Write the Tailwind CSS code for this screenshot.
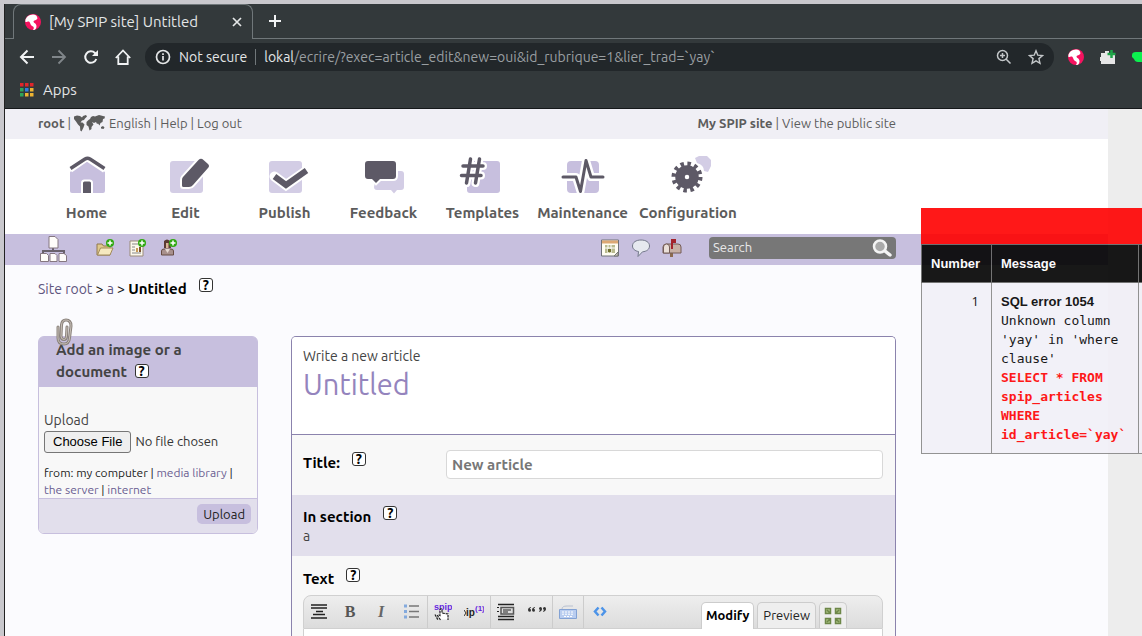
<!DOCTYPE html>
<html lang="en">
<head>
<meta charset="utf-8">
<title>[My SPIP site] Untitled</title>
<script src="https://cdn.jsdelivr.net/npm/@tailwindcss/browser@4"></script>
</head>
<body class="h-screen overflow-hidden bg-[#c9c8cd] pt-1 pl-1 font-['Ubuntu','Open_Sans',sans-serif] text-[13px] text-[#444]">
<svg class="hidden">
  <symbol id="spip" viewBox="0 0 16 16"><circle cx="8" cy="8" r="8" fill="#f5125f"/><path d="M.5 8C-.5 4 4 .5 8 .5c3 0 4.800 2.200 4.300 4.200C11.800 6.200 8.500 6 8.500 7.600c0 1.400 3 2 3 4.600 0 2-1 3.300-2.300 3.800H8c1-1.500 1.300-3-.5-3.800C5 11 5.500 8.500 4 7.500 3 7 1.500 8.500.5 8Z" fill="#fff"/></symbol>
  <symbol id="plus" viewBox="0 0 8 8"><circle cx="4" cy="4" r="4" fill="#2fa810"/><path d="M4 1.500v5M1.500 4h5" stroke="#fff" stroke-width="1.500"/></symbol>
</svg>
<div class="flex h-full flex-col overflow-hidden border-l border-[#222]">
  <!-- Browser chrome -->
  <header class="h-[105px] shrink-0 border-b border-[#15181a] bg-[#33393b] text-[15px] text-[#e4e6e7]">
    <div class="flex h-[35px] items-stretch">
      <div class="w-2 border-b border-[#70777a]"></div>
      <div class="flex w-60 items-center rounded-t-lg border border-b-0 border-[#70777a] pl-[11px] pr-[7px]">
        <svg class="size-4 shrink-0"><use href="#spip"/></svg>
        <span class="ml-2 grow whitespace-nowrap">[My SPIP site] Untitled</span>
        <button aria-label="Close tab"><svg class="size-4" viewBox="0 0 16 16" stroke="#e4e6e7" stroke-width="1.700"><path d="m4 4 8 8m0-8-8 8"/></svg></button>
      </div>
      <div class="flex grow items-center border-b border-[#70777a] pl-[14px]">
        <button aria-label="New tab"><svg class="size-4" viewBox="0 0 16 16" stroke="#f1f3f4" stroke-width="2"><path d="M8 2v12M2 8h12"/></svg></button>
      </div>
    </div>
    <div class="flex h-9 items-center pl-[14px] text-sm">
      <div class="flex gap-4">
        <button aria-label="Back"><svg class="size-4" viewBox="0 0 16 16" fill="none" stroke="#f1f3f4" stroke-width="2"><path d="M15 8H2m6.500-6.500L2 8l6.500 6.500"/></svg></button>
        <button aria-label="Forward"><svg class="size-4" viewBox="0 0 16 16" fill="none" stroke="#80868a" stroke-width="1.800"><path d="M1 8h13M7.500 1.500 14 8l-6.500 6.500"/></svg></button>
        <button aria-label="Reload"><svg class="size-4" viewBox="0 0 16 16" fill="none" stroke="#f1f3f4" stroke-width="2"><path d="M13.300 10A5.700 5.700 0 1 1 12 4l1.500 1.500"/><path d="M15 1v6H9Z" fill="#f1f3f4" stroke="none"/></svg></button>
        <button aria-label="Home page"><svg class="size-4" viewBox="0 0 16 16" fill="none" stroke="#f1f3f4" stroke-width="1.800"><path d="M.8 9 8 1.500 15.200 9M3.300 7.500V15h9.400V7.500"/></svg></button>
      </div>
      <div class="ml-[14px] flex h-7 min-w-0 grow items-center rounded-full bg-[#22272a] pr-[10px] pl-[10px]">
        <svg class="size-4" viewBox="0 0 16 16" fill="none" stroke="#e4e6e7" stroke-width="1.700"><circle cx="8" cy="8" r="6.500"/><path d="M8 7v4.500M8 4.300V6"/></svg>
        <span class="ml-2 whitespace-nowrap">Not secure</span>
        <span class="mx-2 h-4 w-px bg-[#70777a]"></span>
        <span class="grow whitespace-nowrap text-[#9a9fa2]"><span class="text-[#e4e6e7]">lokal</span>/ecrire/?exec=article_edit&amp;new=oui&amp;id_rubrique=1&amp;lier_trad=`yay`</span>
        <button aria-label="Zoom"><svg class="size-4" viewBox="0 0 16 16" fill="none" stroke="#c3c7c9" stroke-width="1.500"><circle cx="6.500" cy="6.500" r="5"/><path d="m10 10 4.500 4.500M4 6.500h5M6.500 4v5"/></svg></button>
        <button aria-label="Bookmark" class="ml-4"><svg class="size-4" viewBox="0 0 16 16" fill="none" stroke="#c3c7c9" stroke-width="1.400"><path d="m8 1.800 1.800 4.400 4.700.4-3.600 3 1.100 4.700L8 11.800l-4 2.500 1.100-4.700-3.600-3 4.700-.4Z"/></svg></button>
      </div>
      <div class="ml-[14px] flex w-[74px] shrink-0 gap-4 overflow-hidden">
        <svg class="size-4 shrink-0"><use href="#spip"/></svg>
        <svg class="size-4 shrink-0" viewBox="0 0 16 16"><path d="M1 4h4V2h4v2h6v11H1v-3H0V8h1Z" fill="#e6e6e6"/><path d="M11.500 1v8M7.500 5h8" stroke="#1fa548" stroke-width="2.500"/></svg>
        <svg class="size-4 shrink-0" viewBox="0 0 16 16"><path d="M0 6q0-3 4-3h12v10H6q-3 0-4-3L0 8Z" fill="#0cf04f"/></svg>
      </div>
    </div>
    <div class="flex h-[30px] items-center pl-[15px]">
      <a href="#apps" class="flex items-center gap-[9px]"><svg class="size-[14px]" viewBox="0 0 14 14"><path d="M0 0h3.500v3.500H0zM5 0h3.500v3.500H5zM10 0h3.500v3.500H10z" fill="#e0262b"/><path d="M0 5h3.500v3.500H0zM0 10h3.500v3.500H0z" fill="#2ea55a"/><path d="M5 5h3.500v3.500H5z" fill="#2f7de0"/><path d="M10 5h3.500v3.500H10zM5 10h3.500v3.500H5zM10 10h3.500v3.500H10z" fill="#edb432"/></svg>Apps</a>
    </div>
  </header>

  <div class="grow bg-[#ededed] pr-[34px]">
    <div class="h-full bg-[#fbfbfe]">
      <div class="bg-[#f0eff5] pl-[33px]">
        <div class="flex h-[30px] max-w-[858px] items-center justify-between whitespace-nowrap text-[#5c5c5c]">
          <div class="flex items-center gap-[3px]"><a href="#root" class="font-bold">root</a> |
            <svg class="h-[18px] w-8" viewBox="0 0 32 18" fill="#5c5c5c"><path d="m0 1.500 3-1 3 .5 2 1.500 1-1.500 3-1 1 1.500-2 2-1 1.500-2 .5-1.500 2h2l2 2-1 3-2 4-1.200-1-.3-4-2-2-2-3-2-2.500L0 3Z"/><path d="m16 4 1-2 2-1 2 .5L25 0l6 1.500-.5 2-1.500.5-.5 3-2 1-1 2.500-1.500-2-1 .5-1-2-2 1-2-1 1.500 2.500-2 2.500v2l-2 1.500-1-4-2-1.500V7l2-2Z"/><path d="m27 12 2-1 1.500 1.500-1 1.500-2.500-.5Z"/></svg>
            <a href="#lang">English</a> | <a href="#help">Help</a> | <a href="#logout">Log out</a></div>
          <div><a href="#site" class="font-bold">My SPIP site</a> | <a href="#public">View the public site</a></div>
        </div>
      </div>

      <nav class="flex h-[95px] bg-white pt-[13px] pl-8 text-[15px] leading-5 font-bold text-[#5c5c5c]">
        <a href="#home" class="flex w-[99px] flex-col items-center gap-[3px]"><svg class="size-12" viewBox="0 0 48 48"><path d="M7 20 24 9l18 11v19q0 2-2 2H9q-2 0-2-2Z" fill="#c7bfde"/><path d="M7 17.500 22 7q2-1.500 4 0l16 10.500" fill="none" stroke="#fff" stroke-width="7"/><path d="M7.500 16.500 22 7q2.500-1.500 5 0l14.500 9.500" fill="none" stroke="#5d5966" stroke-width="3.500"/><path d="M19 41V31q0-2.500 2.500-2.500h5q2.500 0 2.500 2.500v10" fill="#5d5966" stroke="#fff" stroke-width="2"/></svg>Home</a>
        <a href="#edit" class="flex w-[99px] flex-col items-center gap-[3px]"><svg class="size-12" viewBox="0 0 48 48"><rect x="8" y="9" width="33" height="32" rx="3" fill="#d3cde5"/><path d="M20 33.500V28q0-2 1-3L36.500 8Q39 5.500 41.500 8l4.500 4q2 2 0 4L31 33q-1.500 2-4 2h-5.500Q20 35 20 33.500Z" fill="#5d5966" stroke="#fff" stroke-width="4" paint-order="stroke"/></svg>Edit</a>
        <a href="#publish" class="flex w-[99px] flex-col items-center gap-[3px]"><svg class="size-12" viewBox="0 0 48 48" fill="none"><rect x="8" y="9" width="33" height="32" rx="3" fill="#d3cde5"/><path d="m13.500 24.500 11.500 8.500 20-14" stroke="#fff" stroke-width="10" stroke-linecap="round"/><path d="m13.500 24.500 11.500 8.500 20.500-14.500" stroke="#5d5966" stroke-width="6"/></svg>Publish</a>
        <a href="#feedback" class="flex w-[99px] flex-col items-center gap-[3px]"><svg class="size-12" viewBox="0 0 48 48"><path d="M17 19h24q3 0 3 3v13q0 3-3 3h-4l-3 3.500-3-3.500H17q-3 0-3-3Z" fill="#d3cde5"/><path d="M8 9h25q3 0 3 3v12q0 3-3 3H20l-4 4-4-4H8q-3 0-3-3V12q0-3 3-3Z" fill="#5d5966" stroke="#fff" stroke-width="4" paint-order="stroke"/></svg>Feedback</a>
        <a href="#templates" class="flex w-[99px] flex-col items-center gap-[3px]"><svg class="size-12" viewBox="0 0 48 48" fill="none" stroke-linecap="round"><rect x="8" y="9" width="33" height="32" rx="3" fill="#c7bfde"/><path d="m11.500 7-4 24m13-24-4 24M4 14h20M2.500 23.500H22" stroke="#fff" stroke-width="8"/><path d="m11.500 7-4 24m13-24-4 24M4 14h20M2.500 23.500H22" stroke="#5d5966" stroke-width="3.500"/></svg>Templates</a>
        <a href="#maintenance" class="flex w-[101px] flex-col items-center gap-[3px]"><svg class="size-12" viewBox="0 0 48 48" fill="none" stroke-linecap="round" stroke-linejoin="round"><rect x="8" y="9" width="32" height="32" rx="4" fill="#c7bfde"/><path d="M4 25h13l4.500 14.500L27 8.500 32 25h12" stroke="#fff" stroke-width="8"/><path d="M4 25h13l4.500 14.500L27 8.500 32 25h12" stroke="#5d5966" stroke-width="3"/></svg>Maintenance</a>
        <a href="#configuration" class="flex w-[110px] flex-col items-center gap-[3px]"><svg class="size-12" viewBox="0 0 48 48"><path d="m31 6 4-2h8l4 4v6l-3 6-4-1q0-6-7-8Z" fill="#d3cde5"/><circle cx="23" cy="25" r="7" fill="none" stroke="#5d5966" stroke-width="9.500"/><circle cx="23" cy="25" r="13" fill="none" stroke="#5d5966" stroke-width="5" stroke-dasharray="3.403"/></svg>Configuration</a>
      </nav>

      <div class="bg-[#c7bfde] pl-[33px]">
        <div class="flex h-[31px] max-w-[858px] items-center pb-[3px]">
          <a href="#plan" aria-label="Site map" class="mt-[2px] ml-[2px]"><svg class="h-[26px] w-[27px]" viewBox="0 0 27 26"><path d="M13 11v4M3 18v-3h21v3" fill="none" stroke="#6a626c" stroke-width="2"/><path d="M9 .5h6l3 3V12H9Zm-8.500 17h6l2 2v6h-8Zm9.500 0h5l2 2v6h-7Zm9 0h5l2.500 2v6H19Z" fill="#fffdfa" stroke="#857780"/></svg></a>
          <div class="ml-[29px] flex gap-[14px]">
            <a href="#newsection" aria-label="New section"><svg class="size-[18px]" viewBox="0 0 18 18"><path d="M1 16V5h5l1.500 2H14v9Z" fill="#e0c98c" stroke="#90784c"/><path d="m1.500 16 3-7H17l-3 7Z" fill="#f6e9bf" stroke="#a18a5a"/><use href="#plus" x="10" width="8" height="8"/></svg></a>
            <a href="#newarticle" aria-label="New article"><svg class="size-[18px]" viewBox="0 0 18 18"><path d="M2 2h13v15H2Z" fill="#fbf8ec" stroke="#9a8b78"/><path d="M4 5h6M4 8h3M4 11h3M4 14h9" stroke="#888" stroke-width="1.200"/><path d="M8 9h2v4H8z" fill="#c79a57"/><path d="M11 8h2v5h-2z" fill="#7a5030"/><use href="#plus" x="10" width="8" height="8"/></svg></a>
            <a href="#newauthor" aria-label="New author"><svg class="size-[18px]" viewBox="0 0 18 18"><path d="M4 2q3-3 6 0l1 7H4Z" fill="#5b3b32"/><path d="M6 4h2.500v5.500H6Z" fill="#d9b496"/><path d="M1.500 16v-4q0-2 2.500-2h7q2.500 0 2.500 2v4Z" fill="#a8908c" stroke="#674c43"/><path d="M5 10h5l-2.500 4Z" fill="#e6d9d2"/><use href="#plus" x="9" width="8" height="8"/></svg></a>
          </div>
          <div class="ml-auto flex gap-[11px]">
            <a href="#calendar" aria-label="Calendar"><svg class="size-5" viewBox="0 0 20 20"><path d="M1.500 2h17v16h-17Z" fill="#fffdf2" stroke="#6e7177"/><path d="M2 2.500h16v3H2z" fill="#dda874"/><path d="M5 7h10v8H5z" fill="#b9ba8e"/><path d="M5 10h10M8 7v8m3-8v8" stroke="#fff"/><path d="M8 11h3v3H8z" fill="#71702e"/><path d="m14 18 4-4v4Z" fill="#c9c4b5" stroke="#777"/></svg></a>
            <a href="#messages" aria-label="Messages"><svg class="size-5" viewBox="0 0 20 20"><path d="M10 2c5 0 8.500 2.300 8.500 6 0 3.400-3 5.500-7 5.800L7 18.500l.5-5C4 13 1.500 11 1.500 8c0-3.700 3.500-6 8.500-6Z" fill="#e6e9ef" stroke="#73788a"/></svg></a>
            <a href="#mailbox" aria-label="Mailbox"><svg class="size-5" viewBox="0 0 20 20"><path d="M8 15h3v4H8z" fill="#8b6a4e"/><path d="M1 15V9q0-3 3.500-3H16q3 0 3 3v6Z" fill="#c7b0a5" stroke="#745c57"/><path d="M1.500 15V9q0-3 3-3t3 3v6Z" fill="#eadfd8" stroke="#745c57"/><path d="M9 11V1h5v4h-3v6Z" fill="#a3232b"/></svg></a>
          </div>
          <form class="ml-[27px] flex h-[22px] w-[187px] items-center rounded-[4px] bg-[#777] pr-1 pl-1">
            <input aria-label="Search" placeholder="Search" class="w-0 grow bg-transparent text-[13px] text-white outline-none placeholder:text-[#e8e8e8]">
            <button aria-label="Search"><svg class="size-5" viewBox="0 0 20 20" fill="#aaa" stroke="#f4f4f4"><path d="m13 13 5 4" stroke-width="3.500" stroke-linecap="round"/><circle cx="8" cy="8.500" r="6" stroke-width="2.500"/></svg></button>
          </form>
        </div>
      </div>

      <div class="flex h-[71px] items-start pt-[13px] pl-[33px] text-[#111]">
        <div class="pt-px text-sm leading-5"><a href="#siteroot" class="text-[#5f567e]">Site root</a> &gt; <a href="#a" class="text-[#5f567e]">a</a> &gt; <b class="text-[15px] text-black">Untitled</b></div>
        <a href="#help1" aria-label="Help" class="ml-3 flex size-[14px] items-center justify-center rounded-[3px] border border-[#333] bg-white text-sm leading-none font-bold text-black">?</a>
      </div>

      <div class="flex max-w-[891px] items-start gap-[33px] pl-[33px]">
        <aside class="relative w-[220px] shrink-0 rounded-md border border-[#c7bfde] bg-[#f8f8f8]">
          <svg class="absolute -top-[19px] left-4 h-7 w-5" viewBox="0 0 20 28" fill="none" stroke-linecap="round"><path d="M3 9v11q0 6 6 6 5 0 5.500-6L16 8q0-6-5-6Q7 2 6.500 7L6 18q0 3.500 3 3.500 2.500 0 2.500-3.500L12 9" stroke="#8a827c" stroke-width="3"/><path d="M3 9v11q0 6 6 6 5 0 5.500-6L16 8q0-6-5-6Q7 2 6.500 7L6 18q0 3.500 3 3.500 2.500 0 2.500-3.500L12 9" stroke="#c8c0b8"/></svg>
          <h2 class="h-[50px] rounded-t-[4px] bg-[#c7bfde] pt-[2px] pl-[17px] text-[15px] leading-[22px] font-bold text-[#444]">Add an image or a<br>document <a href="#help2" aria-label="Help" class="ml-1 inline-flex size-[14px] items-center justify-center rounded-[3px] border border-[#333] bg-white align-[1px] text-sm leading-none text-black">?</a></h2>
          <form>
            <div class="h-[111px] px-[5px] pt-[23px]">
              <label for="file" class="block text-sm leading-[21px]">Upload</label>
              <input id="file" type="file" class="block h-[22px] w-full text-[13px] text-[#333] file:mr-1 file:h-[22px] file:rounded-[3px] file:border file:border-solid file:border-[#767676] file:bg-[#efefef] file:px-2 file:font-['Liberation_Sans'] file:text-[13px] file:text-black">
              <p class="mt-[11px] text-xs leading-[17px] text-[#222]">from: my computer | <a href="#media" class="text-[#6b5f92]">media library</a> |<br><a href="#server" class="text-[#6b5f92]">the server</a> | <a href="#internet" class="text-[#6b5f92]">internet</a></p>
            </div>
            <div class="flex h-[35px] justify-end rounded-b-[5px] border-t border-[#c7bfde] bg-[#e2dfec] pt-[5px] pr-[6px]"><button type="button" class="h-5 rounded-[5px] bg-[#c7bfde] px-[6px] text-[13px] leading-5 text-[#222]">Upload</button></div>
          </form>
        </aside>

        <main class="min-w-0 grow rounded-t-[5px] border border-b-0 border-[#8b83ad] bg-[#f8f8f8]">
          <div class="h-[98px] rounded-t-[4px] border-b border-[#8b83ad] bg-white pt-[9px] pl-[11px]">
            <p class="text-sm leading-5">Write a new article</p>
            <h1 class="text-[29px] leading-9 text-[#9484bd]">Untitled</h1>
          </div>
          <form>
            <div class="flex h-[60px] pt-[15px] pr-3 pl-[11px]">
              <div class="flex w-[143px]"><label for="title" class="pt-[3px] text-[15px] leading-5 font-bold text-black">Title:</label><a href="#help3" aria-label="Help" class="mt-[2px] ml-3 flex size-[14px] items-center justify-center rounded-[3px] border border-[#333] bg-white text-sm leading-none font-bold text-black">?</a></div>
              <input id="title" placeholder="New article" class="h-[29px] w-0 grow rounded-[4px] border border-[#d8d8d8] bg-white px-[5px] text-[15px] font-bold placeholder:text-[#777]">
            </div>
            <div class="h-[61px] bg-[#e2dfec] pt-[11px] pl-[11px]">
              <div class="flex"><span class="text-[15px] leading-[21px] font-bold text-black">In section</span><a href="#help4" aria-label="Help" class="ml-3 flex size-[14px] items-center justify-center rounded-[3px] border border-[#333] bg-white text-sm leading-none font-bold text-black">?</a></div>
              <p class="text-sm leading-[18px]">a</p>
            </div>
            <div class="pt-3 pr-3 pl-[11px]">
              <div class="flex h-[27px]"><label for="text" class="text-[15px] leading-[21px] font-bold text-black">Text</label><a href="#help5" aria-label="Help" class="ml-3 flex size-[14px] items-center justify-center rounded-[3px] border border-[#333] bg-white text-sm leading-none font-bold text-black">?</a></div>
              <div class="flex h-[34px] items-stretch rounded-t-lg border border-[#d0d0d0] bg-linear-to-b from-[#eee] to-[#dcdcdc]">
                <div class="flex items-center gap-[13px] border-r border-[#ccc] px-[6px]">
                  <button type="button" aria-label="Heading"><svg class="size-[18px]" viewBox="0 0 18 18" stroke="#222" stroke-width="1.500"><path d="M1 2h16M1 5h16M6 8.500h7M3 11.500h12M1 15h16"/></svg></button>
                  <button type="button" class="w-[18px] font-['Liberation_Serif'] text-base font-bold text-[#555]">B</button>
                  <button type="button" class="w-[18px] font-['Liberation_Serif'] text-base font-bold text-[#666] italic">I</button>
                  <button type="button" aria-label="List"><svg class="size-[18px]" viewBox="0 0 18 18"><path d="M6 3h10M6 8.500h10M6 14h10" stroke="#777" stroke-width="1.500"/><path d="M1 1.500h3v3H1zm0 5.500h3v3H1zm0 5.500h3v3H1z" fill="#84aadd"/></svg></button>
                </div>
                <div class="flex items-center gap-3 border-r border-[#ccc] px-[6px]">
                  <button type="button" aria-label="Link"><svg class="size-[18px]" viewBox="0 0 18 18"><text x="0" y="7" font-family="Liberation Sans" font-size="9" font-weight="bold" fill="#6529df">spip</text><path d="M6 16.500 3.500 12.500q1-1 2.500 0V6.500q1-1 2 0V10l6 1v5.500Z" fill="#fff"/><path d="m6.500 17-3-4.500q1-1 2.500 0v-6q1-1 2 0V10l6 1v6M1 11.500l3 5.500" fill="none" stroke="#222" stroke-width="1.200" stroke-dasharray="2.500 .8"/></svg></button>
                  <button type="button" aria-label="Footnote"><svg class="h-[18px] w-5" viewBox="0 0 20 18"><path d="m0 7 2 3-2 3" fill="none" stroke="#333"/><text x="2" y="13" font-family="Liberation Sans" font-size="10" font-weight="bold" fill="#222">ip</text><text x="11" y="8" font-family="Liberation Sans" font-size="8" font-weight="bold" fill="#6529df">(1)</text></svg></button>
                </div>
                <div class="flex items-center gap-[13px] border-r border-[#ccc] px-[6px]">
                  <button type="button" aria-label="Quote"><svg class="size-[18px]" viewBox="0 0 18 18" fill="none" stroke="#222" stroke-width="1.500"><path d="M1 1.500h16M1 16.500h16M1 13.500h16"/><path d="M4 4.500h12.500v6.500H4Z" fill="#ddd" stroke="#555"/><path d="M6 7h8M6 9h5M0 4.500h2m-2 4h2" stroke-width="1"/></svg></button>
                  <button type="button" aria-label="Quotation marks"><svg class="size-[18px]" viewBox="0 0 18 18" fill="#333"><path d="M3 4Q0 4.500 0 7q0 1.800 1.500 1.800T3 7.300 1.700 6Q2 5 3 4.700Zm4 0Q4 4.500 4 7q0 1.800 1.500 1.800T7 7.300 5.700 6Q6 5 7 4.700Zm4 4.800q3-.5 3-3Q14 4 12.500 4T11 5.500t1.300 1.300q-.3 1-1.300 1.300Zm4 0q3-.5 3-3Q18 4 16.500 4T15 5.500t1.300 1.300q-.3 1-1.300 1.300Z"/></svg></button>
                </div>
                <div class="flex items-center border-r border-[#ccc] px-[6px]"><button type="button" aria-label="Keyboard"><svg class="size-[18px]" viewBox="0 0 18 18"><path d="M3 6q0-3 5-3h6" fill="none" stroke="#b8c0d0"/><path d="M.5 6.500h17v9H.5Z" fill="#b9cdf0" stroke="#83a2d4"/><path d="M3 9h12M3 11.200h12M5 13.500h8" stroke="#fff" stroke-dasharray="2 1"/></svg></button></div>
                <div class="flex items-center px-2"><button type="button" aria-label="Code"><svg class="size-4" viewBox="0 0 16 16" fill="none" stroke="#4d94e8" stroke-width="2.500"><path d="M6.500 3.500 3 7.500l3.500 4m3-8 3.500 4-3.500 4"/></svg></button></div>
                <div class="mr-[35px] ml-auto flex items-end gap-[3px] text-[#222]">
                  <button type="button" class="-mb-px h-[27px] rounded-t-[5px] border border-b-0 border-[#ccc] bg-white px-1 font-bold text-black">Modify</button>
                  <button type="button" class="h-[26px] rounded-t-[5px] border border-b-0 border-[#ccc] bg-[#eee] px-[5px]">Preview</button>
                  <button type="button" aria-label="Full screen" class="flex h-[26px] items-center rounded-t-[5px] border border-b-0 border-[#ccc] bg-[#eee] px-1"><svg class="size-[18px]" viewBox="0 0 18 18" fill="#a9bf83" stroke="#6d8748" stroke-width="1.500"><path d="M1.500 1.500h5v5h-5Zm10 0h5v5h-5Zm-10 10h5v5h-5Zm10 0h5v5h-5ZM3 3l3 3m9-3-3 3m-9 9 3-3m9 3-3-3"/></svg></button>
                </div>
              </div>
              <textarea id="text" class="block h-10 w-full resize-none border-x border-[#d0d0d0] bg-white outline-none"></textarea>
            </div>
          </form>
        </main>
      </div>
    </div>
  </div>
</div>

<!-- SQL error overlay, continues past the right edge of the window -->
<div class="absolute top-[208px] right-0 left-[921px] overflow-hidden opacity-90">
  <table class="w-[320px] table-fixed border-collapse font-['Liberation_Sans'] text-[13px] leading-[19px] text-black">
    <caption class="h-9 bg-[#f00]"></caption>
    <colgroup><col class="w-[70px]"><col class="w-[147px]"><col></colgroup>
    <thead><tr class="h-[38px] bg-black text-left text-white"><th class="border border-[#666] px-[9px]">Number</th><th class="border border-[#666] px-[9px]">Message</th><th class="border border-[#666]"></th></tr></thead>
    <tbody><tr class="bg-[#f2f0f8] align-top"><td class="border border-[#888] px-3 pt-[9px] text-right font-['Open_Sans']">1</td><td class="border border-[#888] px-[9px] py-[9px]"><b>SQL error 1054</b><div class="font-['DejaVu_Sans_Mono']">Unknown column 'yay' in 'where clause'<br><b class="text-[#f00]">SELECT * FROM spip_articles WHERE id_article=`yay`</b></div></td><td class="border border-[#888]"></td></tr></tbody>
  </table>
</div>
</body>
</html>
